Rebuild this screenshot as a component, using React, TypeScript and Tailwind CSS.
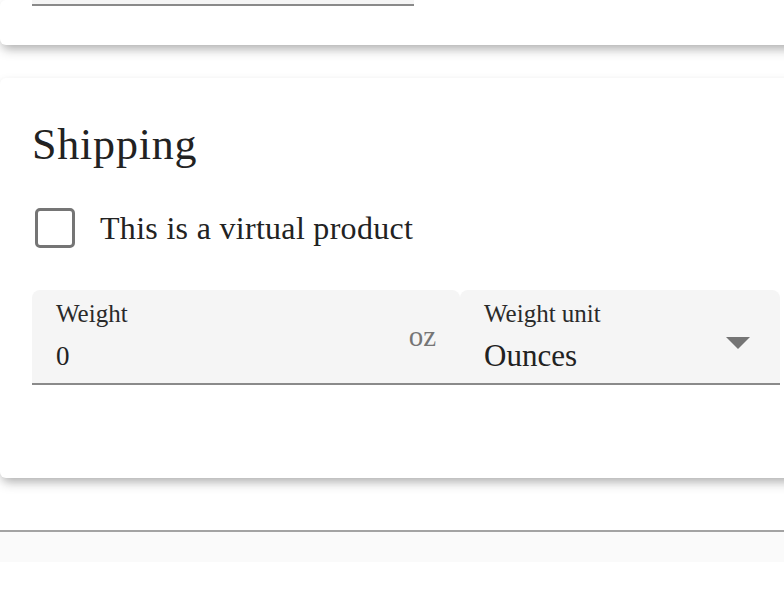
import { useState } from "react"

const serif = { fontFamily: '"Liberation Serif", "DejaVu Serif", serif' }

function CardShell({ children, className = "" }: { children: React.ReactNode; className?: string }) {
  return (
    <div
      className={`w-[820px] bg-white rounded-[6px] shadow-[0_7px_12px_-3px_rgba(0,0,0,0.28),0_2px_8px_rgba(0,0,0,0.08)] ${className}`}
    >
      {children}
    </div>
  )
}

export default function App() {
  const [virtual, setVirtual] = useState(false)
  const [weight, setWeight] = useState("0")

  return (
    <div className="w-[784px] h-[608px] overflow-hidden bg-white text-[#222]" style={serif}>
      {/* previous card, scrolled mostly out of view */}
      <CardShell className="pb-[39px]">
        <div className="ml-[32px] w-[382px] h-[6px] bg-[#f5f5f5] border-b-2 border-[#8a8a8a]" />
      </CardShell>

      <div className="h-[33px]" />

      {/* Shipping */}
      <CardShell className="pt-[42px] pb-[93px] pl-[32px]">
        <h2 className="text-[44px] leading-[50px] font-normal tracking-[0.8px]">Shipping</h2>

        <label className="mt-[38px] flex items-center h-[40px] cursor-pointer">
          <button
            type="button"
            onClick={() => setVirtual(!virtual)}
            className={`ml-[3px] w-[40px] h-[40px] rounded-[5px] border-[3px] ${
              virtual ? "border-[#3f51b5] bg-[#3f51b5]" : "border-[#757575] bg-white"
            }`}
          />
          <span className="ml-[25px] text-[32px] leading-[40px] tracking-[0.3px]">This is a virtual product</span>
        </label>

        <div className="mt-[42px] flex w-[748px] border-b-2 border-[#8a8a8a]">
          <div className="w-[428px] h-[93px] flex bg-[#f5f5f5] rounded-t-[8px] pl-[24px] pr-[24px] pt-[10px]">
            <div className="flex-1 flex flex-col">
              <span className="text-[25px] leading-[28px] text-[#2a2a2a]">Weight</span>
              <input
                value={weight}
                onChange={(e) => setWeight(e.target.value)}
                className="mt-[12px] w-full bg-transparent outline-none text-[27px] leading-[32px] text-[#222]"
                style={serif}
              />
            </div>
            <span className="mt-[20px] text-[29px] leading-[32px] text-[#757575]">oz</span>
          </div>
          <div className="w-[320px] h-[93px] flex bg-[#f5f5f5] rounded-t-[8px] pl-[24px] pr-[30px] pt-[10px]">
            <div className="flex-1 flex flex-col">
              <span className="text-[25px] leading-[28px] text-[#2a2a2a]">Weight unit</span>
              <span className="mt-[12px] text-[31px] leading-[32px] text-[#222]">Ounces</span>
            </div>
            <svg width="24" height="12" viewBox="0 0 24 12" className="mt-[37px]">
              <path d="M0 0 L24 0 L12 12 Z" fill="#757575" />
            </svg>
          </div>
        </div>
      </CardShell>

      <div className="h-[52px]" />

      {/* bottom bar edge */}
      <div className="h-[32px] bg-[#fafafa] border-t-2 border-[#a3a3a3]" />
    </div>
  )
}
